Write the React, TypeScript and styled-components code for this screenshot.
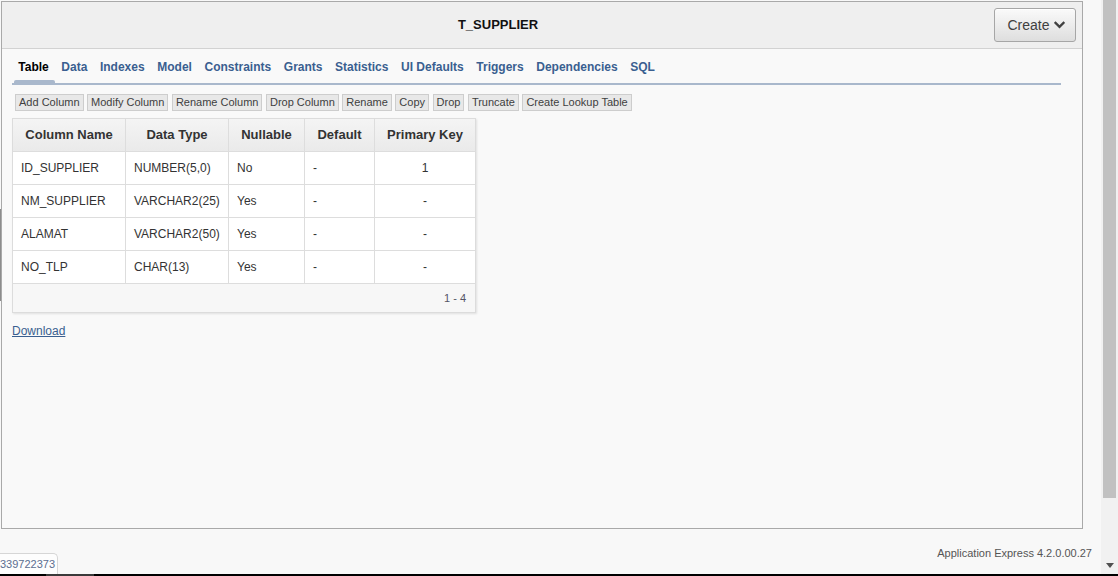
import React from "react";
import styled, { createGlobalStyle } from "styled-components";

const GlobalStyle = createGlobalStyle`
  html, body { margin: 0; padding: 0; background: #f8f8f8; }
  body { font-family: "Liberation Sans", Arial, sans-serif; }
  * { box-sizing: border-box; }
`;

const Screen = styled.div`
  width: 1118px;
  height: 576px;
  display: flex;
  flex-direction: column;
  overflow: hidden;
  background: #f8f8f8;
  font-family: "Liberation Sans", Arial, sans-serif;
`;

const Viewport = styled.div`
  display: flex;
  height: 574px;
`;

const MainCol = styled.div`
  width: 1101px;
  display: flex;
  flex-direction: column;
`;

const PanelRow = styled.div`
  display: flex;
  margin-top: 1px;
`;

const EdgeStrip = styled.div`
  width: 1px;
  display: flex;
  flex-direction: column;
`;

const EdgeMark = styled.div`
  margin-top: 208px;
  height: 92px;
  background: #8c8c8c;
`;

const Panel = styled.section`
  width: 1082px;
  height: 528px;
  border: 1px solid #a9a9a9;
  background: #f9f9f9;
  display: flex;
  flex-direction: column;
`;

const Header = styled.header`
  height: 47px;
  flex: none;
  display: flex;
  align-items: center;
  background: #efefef;
  border-bottom: 1px solid #d2d2d2;
  padding-right: 6px;
`;

const Title = styled.h1`
  flex: 1;
  margin: 0 0 1px;
  text-align: center;
  font-size: 13px;
  font-weight: bold;
  color: #111;
`;

const CreateButton = styled.button`
  width: 82px;
  height: 34px;
  border: 1px solid #a6a6a6;
  border-radius: 3px;
  background: linear-gradient(#fafafa, #dedede);
  box-shadow: inset 0 1px 0 #fff;
  font-family: "Liberation Sans", Arial, sans-serif;
  font-size: 14px;
  color: #404040;
  display: flex;
  align-items: center;
  justify-content: center;
  gap: 4px;
  padding: 0 0 0 2px;
`;

const Body = styled.div`
  flex: 1;
  padding: 10px 21px 0 10px;
  display: flex;
  flex-direction: column;
  align-items: flex-start;
`;

const TabList = styled.nav`
  align-self: stretch;
  display: flex;
  border-bottom: 2px solid #a9b8cc;
`;

const Tab = styled.span<{ $active?: boolean }>`
  position: relative;
  height: 24px;
  padding: 0 6.3px;
  font-size: 12px;
  line-height: 16px;
  font-weight: bold;
  color: ${(p) => (p.$active ? "#000" : "#3a5f90")};
  &::after {
    content: "";
    display: ${(p) => (p.$active ? "block" : "none")};
    position: absolute;
    left: 2px;
    right: 0;
    bottom: 0;
    height: 3px;
    border-radius: 2px 2px 0 0;
    background: #a9b8cc;
  }
`;

const Toolbar = styled.div`
  display: flex;
  gap: 3.5px;
  margin-top: 9px;
  padding-left: 3px;
`;

const ToolButton = styled.button`
  height: 17px;
  padding: 0 3px;
  border: 1px solid #cdcdcd;
  border-radius: 0;
  background: #e8e8e8;
  font-family: "Liberation Sans", Arial, sans-serif;
  font-size: 11px;
  line-height: 15px;
  color: #404040;
`;

const Grid = styled.div`
  margin-top: 7px;
  width: 464px;
  display: grid;
  grid-template-columns: 112px 102px 75px 69px 100px;
  gap: 1px;
  background: #dddddd;
  border: 1px solid #dcdcdc;
  box-shadow: 1px 1px 2px rgba(0, 0, 0, 0.1);
`;

const HeadCell = styled.div`
  height: 32px;
  display: flex;
  align-items: center;
  justify-content: center;
  padding-bottom: 1px;
  font-weight: bold;
  font-size: 13px;
  color: #333;
  background: linear-gradient(#f4f4f4, #eaeaea);
`;

const Cell = styled.div<{ $center?: boolean }>`
  height: 32px;
  display: flex;
  align-items: center;
  justify-content: ${(p) => (p.$center ? "center" : "flex-start")};
  padding: 0 8px;
  background: #fff;
  font-size: 12px;
  color: #333;
  white-space: nowrap;
`;

const FootCell = styled.div`
  grid-column: 1 / -1;
  height: 28px;
  display: flex;
  align-items: center;
  justify-content: flex-end;
  padding-right: 9px;
  background: #f7f7f7;
  font-size: 11px;
  color: #556;
`;

const DownloadLink = styled.a`
  margin-top: 11px;
  font-size: 12px;
  line-height: 14px;
  color: #3a5f90;
  text-decoration: underline;
`;

const Footer = styled.footer`
  flex: 1;
  display: flex;
  justify-content: space-between;
  align-items: flex-end;
  padding-right: 9px;
`;

const SessionTab = styled.div`
  width: 58px;
  height: 21px;
  display: flex;
  align-items: center;
  justify-content: flex-end;
  padding-right: 2px;
  background: #fdfdfd;
  border: 1px solid #d6d6d6;
  border-left: none;
  border-bottom: none;
  border-radius: 0 5px 0 0;
  font-size: 11px;
  color: #5b6d90;
  white-space: nowrap;
`;

const Version = styled.div`
  align-self: flex-start;
  margin-top: 18px;
  font-size: 11px;
  color: #555;
`;

const ScrollTrack = styled.div`
  width: 17px;
  background: #f1f1f1;
  display: flex;
  flex-direction: column;
  align-items: flex-start;
`;

const ScrollThumb = styled.div`
  margin-left: 2px;
  width: 13px;
  height: 498px;
  background: #c1c1c1;
`;

const ScrollArrow = styled.div`
  margin-top: auto;
  margin-bottom: 6px;
  margin-left: 5px;
  width: 0;
  height: 0;
  border-left: 4px solid transparent;
  border-right: 4px solid transparent;
  border-top: 5px solid #505050;
`;

const BottomBar = styled.div`
  height: 2px;
  display: flex;
  background: #000;
`;

const BarSegment = styled.div`
  margin-left: 46px;
  width: 48px;
  background: #3a3a3a;
`;

const tabs = [
  "Table",
  "Data",
  "Indexes",
  "Model",
  "Constraints",
  "Grants",
  "Statistics",
  "UI Defaults",
  "Triggers",
  "Dependencies",
  "SQL",
];

const actions = [
  "Add Column",
  "Modify Column",
  "Rename Column",
  "Drop Column",
  "Rename",
  "Copy",
  "Drop",
  "Truncate",
  "Create Lookup Table",
];

const headers = ["Column Name", "Data Type", "Nullable", "Default", "Primary Key"];

const rows = [
  ["ID_SUPPLIER", "NUMBER(5,0)", "No", "-", "1"],
  ["NM_SUPPLIER", "VARCHAR2(25)", "Yes", "-", "-"],
  ["ALAMAT", "VARCHAR2(50)", "Yes", "-", "-"],
  ["NO_TLP", "CHAR(13)", "Yes", "-", "-"],
];

const Chevron = () => (
  <svg width="11" height="8" viewBox="0 0 12 9" aria-hidden="true">
    <polyline
      points="1.5,2 6,6.5 10.5,2"
      fill="none"
      stroke="#404040"
      strokeWidth="2.6"
      strokeLinecap="square"
    />
  </svg>
);

export default function App() {
  return (
    <>
      <GlobalStyle />
      <Screen>
        <Viewport>
          <MainCol>
            <PanelRow>
              <EdgeStrip>
                <EdgeMark />
              </EdgeStrip>
              <Panel>
                <Header>
                  <Title>T_SUPPLIER</Title>
                  <CreateButton>
                    Create <Chevron />
                  </CreateButton>
                </Header>
                <Body>
                  <TabList>
                    {tabs.map((t, i) => (
                      <Tab key={t} $active={i === 0}>
                        {t}
                      </Tab>
                    ))}
                  </TabList>
                  <Toolbar>
                    {actions.map((a) => (
                      <ToolButton key={a}>{a}</ToolButton>
                    ))}
                  </Toolbar>
                  <Grid>
                    {headers.map((h) => (
                      <HeadCell key={h}>{h}</HeadCell>
                    ))}
                    {rows.map((r) =>
                      r.map((v, j) => (
                        <Cell key={r[0] + j} $center={j === 4}>
                          {v}
                        </Cell>
                      ))
                    )}
                    <FootCell>1 - 4</FootCell>
                  </Grid>
                  <DownloadLink href="#">Download</DownloadLink>
                </Body>
              </Panel>
            </PanelRow>
            <Footer>
              <SessionTab>339722373</SessionTab>
              <Version>Application Express 4.2.0.00.27</Version>
            </Footer>
          </MainCol>
          <ScrollTrack>
            <ScrollThumb />
            <ScrollArrow />
          </ScrollTrack>
        </Viewport>
        <BottomBar>
          <BarSegment />
        </BottomBar>
      </Screen>
    </>
  );
}
